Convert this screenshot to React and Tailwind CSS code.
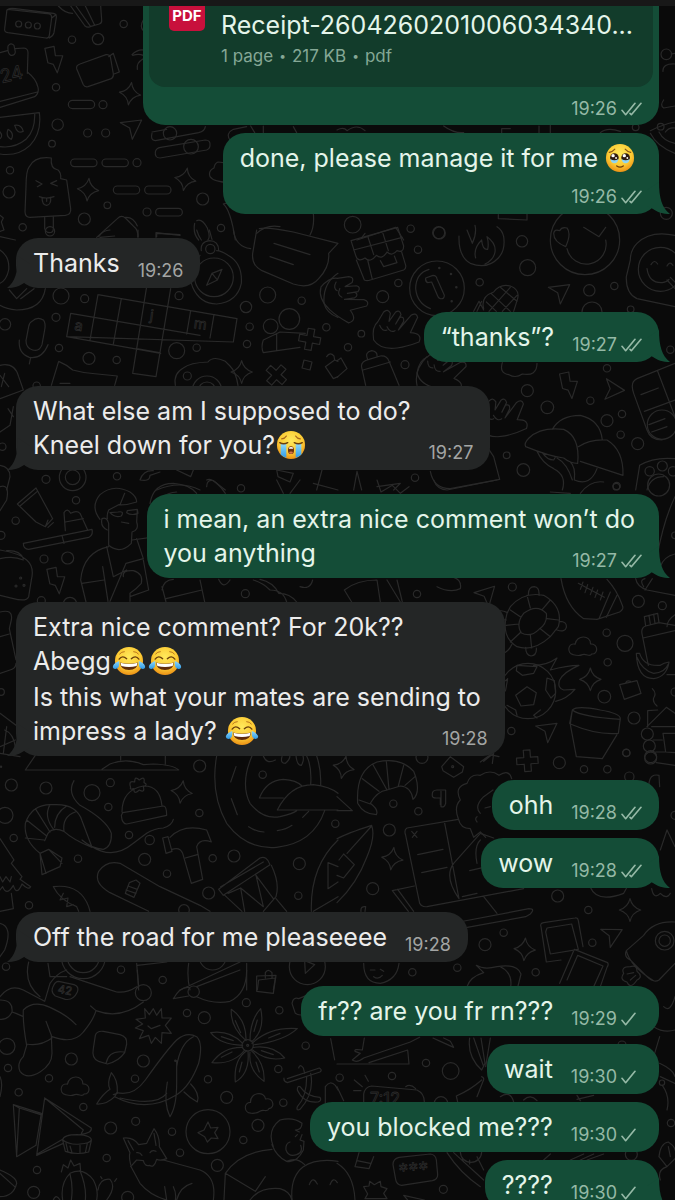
import React from "react";

/* ---------- wallpaper ---------- */

const SPARK = "M0 -34 Q6 -8 32 0 Q6 8 0 34 Q-6 8 -32 0 Q-6 -8 0 -34Z";
const BOLT = "M-26 -36 L2 -40 L4 -12 L26 -10 L6 40 L-4 14 L-20 8Z";
const ARROW = "M-32 -20 L32 -28 L4 30 L-4 -4Z";
const CLOUD = "M-28 28 C-48 24 -46 -6 -24 -4 C-22 -34 22 -34 22 -8 C46 -10 48 22 28 22 C22 34 12 20 0 26 C-10 32 -18 30 -28 28Z";
const PLUS = "M-10 -32 H10 V-10 H32 V10 H10 V32 H-10 V10 H-32 V-10 H-10Z";
const HAND = "M-70 30 Q-76 -10 -58 -24 L-40 -54 Q-28 -66 -20 -50 L-24 -26 L-4 -54 Q8 -62 12 -46 L-4 -18 L8 -38 Q22 -42 20 -26 L4 0 L42 -44 Q58 -54 62 -38 L40 8 Q78 10 66 36 Q30 50 0 54 Q-50 60 -70 30Z M-52 -14 Q-44 6 -30 0 M-30 -10 Q-20 10 -6 2";

/* Each tile is drawn on a grid of three units per pixel. */
const TILES = [
  {
    at: [0, 0],
    circles: [[56, 72, 9], [85, 75, 9], [112, 78, 9], [216, 119, 11], [294, 117, 17], [371, 72, 11], [168, 262, 11], [309, 314, 12], [173, 374, 17], [263, 399, 12], [317, 399, 12], [156, 431, 10], [30, 511, 11], [27, 576, 18], [411, 488, 12], [322, 616, 10], [253, 657, 18], [68, 682, 11], [441, 636, 12], [608, 597, 18], [663, 684, 11], [510, 400, 20], [573, 440, 22]],
    pills: [[205, 301, 79, 25], [212, 477, 79, 23], [306, 477, 79, 23], [340, 558, 79, 24], [434, 558, 79, 24], [467, 625, 80, 23]],
    marks: [[SPARK, 390, 281, 8], [SPARK, 264, 569, 5], [SPARK, 556, 538, 10], [BOLT, 163, 179, -4], [ARROW, 393, 388, 0]],
    paths: [
      "M24 28 L148 42 Q156 44 155 54 L148 106 Q147 115 138 114 L24 98 Q12 96 14 86 L20 36 Q20 28 24 28Z M24 28 Q30 24 46 26 L160 40 Q170 42 169 52 L162 98 Q160 108 148 114 M155 54 L168 44",
      "M175 18 Q195 40 218 40 M212 18 L255 78 Q262 84 270 80 L298 72 Q306 70 305 60 L302 18 M228 18 L272 80 M256 18 L284 76",
      "M240 192 L318 164 Q328 162 331 170 L340 222 Q341 232 334 236 L264 260 Q254 262 250 254 L230 206 Q228 196 240 192Z M326 170 L340 160 L358 216 L342 222",
      "M0 158 L22 152 M46 146 L72 144 Q84 146 84 158 L82 220 M24 138 Q32 126 42 136 L46 156 Q44 168 32 166 Q22 160 24 138Z M82 216 Q108 236 114 262 Q118 280 104 290 L0 322 M112 276 L0 304",
      "M0 352 L118 338 Q126 398 90 436 Q54 470 0 462 M104 340 Q106 392 78 418 Q44 446 0 440 M44 376 Q64 372 70 394 Q52 404 44 376Z M24 388 Q44 400 34 418 Q16 410 24 388Z M0 396 Q10 408 0 416",
      "M154 474 Q104 468 88 500 Q78 512 78 560 L75 636 Q76 652 90 652 L196 646 Q214 644 212 626 L200 540 L182 536 Q184 518 174 510 Q150 506 154 474Z M134 652 V686 Q138 698 148 698 Q160 698 160 686 V650 M108 542 L126 552 L112 560 M170 542 L152 550 L172 558 M118 590 Q138 598 162 590 M126 592 Q126 616 140 616 Q154 614 152 592 M140 594 V604",
      "M290 712 L352 656 Q364 644 376 654 L404 682 Q414 690 414 712 M376 652 Q400 650 412 678 M300 712 L344 708 M468 712 V698 L540 706",
      "M456 400 Q450 420 466 422 L596 398 Q614 394 616 380 M500 388 L456 396 M482 442 L616 420 Q632 420 630 436 Q630 446 620 450 L480 474 Q464 474 466 456 Q468 444 482 442Z",
      "M396 164 Q412 148 430 150 M398 166 Q416 160 430 166 M430 176 Q408 188 412 208 M430 60 Q418 80 430 92",
      "M690 490 L654 486 Q644 490 642 504 Q624 512 630 530 Q640 546 690 548 M670 612 L690 606 M670 612 Q692 630 706 720 M590 662 Q606 654 622 684 Q632 710 624 720 M584 670 Q578 700 596 720 M770 700 Q800 672 840 680 M940 640 Q944 680 930 705",
      "M690 420 Q676 400 700 388 L740 380 M752 378 L764 398 M790 378 V398 M880 380 L890 398",
      "M0 646 L10 654 L4 666 L12 690 L0 694",
    ],
    labels: [["24", 5, 250, 56, -14]],
  },
  {
    at: [337, 0],
    circles: [[47, 674, 25], [221, 686, 11], [307, 699, 18], [988, 163, 16], [896, 382, 10], [988, 640, 18], [971, 380, 10]],
    marks: [],
    paths: [
      "M1014 160 L1002 162 M980 300 Q968 316 980 324 L1014 318 M1014 192 Q976 190 978 214",
      "M940 392 Q980 372 1014 366 M940 400 Q960 440 1014 460 M966 396 Q980 424 1014 430 M985 396 A30 30 0 0 1 1014 384",
      "M60 720 L176 682 L200 720 M72 716 L84 700 M484 644 V656 L570 660 V642 M0 390 Q20 380 30 392 Q60 370 84 392 M320 378 Q350 400 380 398 M494 398 V386 H520 M606 398 V378 M640 376 V398 M790 398 Q810 380 850 394",
    ],
  },
  {
    at: [0, 230],
    circles: [[183, 198, 24], [254, 206, 12], [15, 283, 17], [168, 262, 12], [537, 197, 12], [177, 354, 11], [267, 385, 18], [350, 390, 11], [738, 231, 17], [803, 195, 24], [905, 212, 11], [749, 290, 11], [741, 342, 11], [812, 289, 22], [868, 267, 31], [979, 292, 11], [530, 362, 24], [590, 353, 11], [562, 438, 12], [138, 748, 12], [351, 739, 11], [110, 467, 11], [631, 57, 14], [642, 142, 58], [218, 742, 22], [218, 742, 40], [621, 482, 44], [621, 482, 26], [150, 4, 14], [7, 650, 11]],
    marks: [[PLUS, 929, 328, 10], [PLUS, 829, 435, 42], [SPARK, 725, 426, 0]],
    paths: [
      "M294 194 L711 266 L700 336 L200 320 L212 250 L600 316 M294 194 L270 330 M364 206 L340 342 M440 170 L398 430 L468 440 L512 176 M410 356 L478 368 M572 242 L560 312 M642 254 L630 324 M200 320 L482 370",
      "M604 62 Q600 36 628 32 Q656 32 656 62 M600 76 Q560 130 578 172 Q600 222 650 222 Q712 216 724 160 Q728 100 684 76 Q664 62 650 62 M620 166 L636 130 L666 118 L652 150Z M636 130 L652 150 M590 0 Q596 20 604 30 M628 0 L636 28",
      "M770 0 L758 70 Q754 106 786 122 L880 162 Q930 178 956 146 Q990 110 986 70 L1014 40 L880 6 Q800 -10 778 -4 M822 40 L930 74 M810 80 L880 104 M700 0 Q706 50 752 56 M1014 130 Q968 160 972 220 Q980 250 1014 262",
      "M96 274 Q112 258 130 270 Q138 280 134 300 L126 344 Q118 366 98 360 Q78 354 78 332 L86 290 Q88 278 96 274Z M58 330 Q54 370 88 382 Q126 388 144 344 M92 382 L88 402",
      "M154 466 L176 394 Q200 404 218 420 Q252 430 292 432 L352 438 L344 466 M180 460 H210 M526 466 Q520 430 550 414 Q570 398 624 396 Q640 376 676 394 L690 408 Q708 426 714 466",
      "M0 406 Q44 396 56 440 L70 480 L0 506 M0 436 L26 470 M14 430 L4 470 M0 60 Q30 80 26 120 Q20 150 0 160 M28 180 L50 206 L80 176 M62 206 L102 176 M136 176 Q126 240 50 240 Q20 238 0 226 M0 20 L46 30",
      "M790 330 Q782 350 790 368 L900 352 M790 330 L840 306 L916 310 M830 310 V360 M912 390 L936 396 L930 420 L906 414Z M980 380 Q990 364 1002 378 L1004 390 M976 410 L1004 390 L1014 394 M976 410 L1000 446 L1014 440",
      "M24 536 L40 560 M40 530 L30 586 L0 606 M0 706 Q30 710 30 740 L20 780 M420 750 Q430 720 460 722 M420 750 Q450 756 450 736 L480 726 M530 720 L572 740 L580 720 M620 770 Q620 748 640 752 L676 780 M470 780 Q540 750 600 780 M830 720 L880 730 L870 756 L834 740 Z M950 780 L966 720 M296 20 Q310 0 330 0 M414 0 V20 M470 20 V10 L540 14",
    ],
    labels: [["a", 222, 300, 44, 8], ["j", 448, 270, 44, 8], ["m", 580, 294, 44, 8]],
  },
  {
    at: [337, 230],
    circles: [[243, 59, 11], [305, 8, 18], [555, 34, 17], [572, 113, 24], [184, 159, 11], [137, 200, 18], [428, 157, 11], [757, 181, 17], [832, 168, 11], [765, 246, 30], [881, 238, 10], [73, 311, 10], [33, 352, 11], [204, 404, 12], [1000, 359, 11], [810, 415, 11], [571, 482, 18], [631, 532, 19], [760, 512, 11], [855, 552, 11], [810, 572, 18], [851, 614, 11], [902, 641, 18], [509, 676, 10], [559, 720, 19], [234, 743, 11], [839, 768, 11], [300, 175, 82], [744, 30, 104], [970, 118, 66], [975, 584, 44], [307, 114, 2], [342, 132, 2], [358, 172, 2], [344, 214, 2], [938, 724, 14], [976, 708, 15], [1008, 724, 14]],
    marks: [[HAND, 180, 300, 0], [HAND, 500, 564, -4], [HAND, 20, 205, 50], [HAND, 316, 424, 20], [BOLT, 696, 466, -4], [ARROW, 666, 192, 0], [ARROW, 820, 482, 40]],
    paths: [
      "M42 32 L182 -8 L200 48 Q200 70 180 62 Q166 80 150 66 Q136 90 118 76 Q100 100 84 84 Q62 98 56 76Z M58 90 L82 150 Q90 154 100 150 L200 120 Q208 116 206 106 L194 66 M92 18 L110 74 M136 4 L154 62 M50 60 L196 22 M106 148 L92 90 M130 92 L140 110 L180 98 L172 78",
      "M276 118 Q236 130 236 176 Q240 220 280 236 M266 144 L288 136 Q298 136 300 146 L322 196 Q322 208 310 206 Q304 204 302 198 L284 156 L272 158 Q264 154 266 144Z",
      "M366 18 Q364 80 400 100 Q450 120 484 84 Q506 60 500 20 Q496 0 480 -10 M390 0 L406 40 Q420 10 414 -14 M416 84 Q408 56 434 30 Q436 60 452 58 Q456 40 450 20 Q478 40 474 66 Q470 90 444 102",
      "M650 10 Q652 -4 668 2 Q674 -10 690 -6 Q704 10 686 50 Q650 36 650 10Z M740 -8 L786 20 L806 -8 M690 56 A58 58 0 0 0 806 30",
      "M1014 16 Q940 0 900 40 Q880 60 880 90 L868 140 Q866 190 900 206 L1014 230 M930 116 Q936 160 976 158 Q990 156 996 148 M942 104 Q952 86 962 102 M990 108 Q998 92 1008 106 M990 150 L1014 176 M1000 142 L1014 156",
      "M440 236 Q430 200 470 186 Q490 160 520 168 Q552 180 540 212 L530 244 M410 244 L426 214 L440 240 M462 190 L520 244 M490 172 L540 214 M448 216 L478 244 M520 172 L456 244 M540 196 L496 244 M434 214 L420 244",
      "M86 466 L74 412 Q70 394 96 388 L130 378 Q150 376 156 394 L186 466 M92 388 Q82 366 104 362 Q122 364 120 380 M78 420 L160 396 M0 392 L12 384 L30 416 L0 442 M240 466 Q230 420 270 380 M260 466 M496 398 Q486 430 516 434 Q536 446 556 432 Q600 440 600 400",
      "M566 650 Q560 640 576 624 Q610 590 680 598 Q730 620 722 700 Q700 700 680 684 Q640 680 566 650Z M646 598 Q670 556 730 556 Q790 570 796 630 M724 650 Q760 626 810 630 Q860 660 858 736 L730 694 M600 664 Q616 700 650 716 Q690 736 676 780 M660 684 Q690 700 706 750 M700 696 Q716 710 712 750 Q760 770 780 716 M616 668 Q630 690 650 690 L656 680",
      "M1014 400 L900 446 Q878 456 890 490 L930 600 Q940 630 975 630 M962 424 L1014 560 M912 494 L964 474 M922 544 L1014 510 M936 584 L984 566 M944 606 L990 590 M908 706 Q950 680 1014 686 M908 706 L896 780 M930 780 Q940 740 980 740 M450 650 L470 680 L488 748 L340 776 Q290 776 280 724 M120 770 L190 760 L170 780 M60 724 L50 780 M60 724 L74 780",
    ],
  },
  {
    at: [0, 480],
    circles: [[228, 61, 11], [47, 122, 11], [132, 237, 12], [203, 234, 18], [3, 166, 12], [124, 362, 12], [736, 341, 12], [723, 25, 11], [3, 636, 10], [210, 372, 20], [62, 294, 3], [48, 318, 3], [72, 316, 3], [3, 860, 2]],
    marks: [[BOLT, 169, 302, -4]],
    paths: [
      "M52 72 L108 24 L158 116 L136 140 L108 126Z M136 140 L144 120 M144 142 L160 128 M60 78 L112 34 M70 190 L276 148 Q280 166 266 172 L86 208 Q70 208 70 190Z M186 166 L192 190 M196 152 L192 98 Q202 82 212 100 Q230 90 240 100 L262 148 M196 126 L250 116",
      "M300 118 Q270 80 300 44 Q340 10 390 36 Q410 50 410 66 Q380 76 356 74 L326 90 Q320 104 322 116 M306 116 Q320 110 326 130 L326 196 Q360 224 394 190 L396 156 Q418 150 410 126 L412 88 M330 98 Q344 114 364 108 Q374 92 354 96Z M380 98 Q394 108 414 100 L412 88 L382 92Z M364 126 L386 130 M374 40 L360 74 M306 116 Q300 140 322 150",
      "M326 200 Q250 216 242 300 L258 366 M320 200 L340 290 L380 270 M396 180 L470 170 M410 176 L430 236 L378 250 L330 364 M430 240 L446 330 L390 350 M370 290 Q366 270 400 272 Q430 280 424 310 Q410 326 390 340 V364 M246 310 L312 300 M308 260 L324 364",
      "M0 210 Q60 220 80 240 Q104 260 94 300 L86 350 Q80 366 40 356 L0 346 M0 236 Q40 226 70 240 M20 212 Q60 210 70 236 M0 396 Q40 386 34 420 L28 446 L48 540 M0 470 L28 462 M0 580 L30 570 Q48 566 48 550",
      "M450 70 Q460 10 520 10 Q570 14 590 40 M466 86 Q480 40 530 36 M486 330 Q490 300 520 298 M486 320 L498 366 M600 300 L614 366 M498 356 L606 330 M656 298 Q670 330 690 300 M760 300 Q790 310 810 330 Q850 330 860 366 M780 298 Q820 306 836 340 Q870 340 890 366 M900 320 Q930 330 938 300 M620 0 Q640 -10 676 40 M830 0 L850 40 M900 0 L870 40 M940 10 L1014 30 M0 700 L48 736 M14 750 Q40 760 46 800 M0 800 L46 780 M0 820 L60 830 M20 740 L10 820 M0 20 Q30 10 20 60 L0 92",
    ],
  },
  {
    at: [337, 480],
    circles: [[965, 15, 33], [838, 20, 10], [240, 342, 11], [526, 321, 12], [904, 364, 18], [976, 377, 12], [809, 458, 11], [864, 490, 24], [812, 547, 11], [802, 650, 19], [523, 753, 11], [891, 714, 18], [868, 819, 11], [573, 633, 83], [931, 762, 18], [937, 798, 18], [941, 834, 18], [1014, 636, 12], [1014, 166, 10]],
    marks: [[CLOUD, 738, 498, 4], [SPARK, 760, 598, 0], [ARROW, 628, 758, 0], [ARROW, 446, 352, -10]],
    paths: [
      "M520 380 Q560 334 620 346 Q680 380 664 440 L640 470 Q590 516 540 500 Q490 470 510 400Z M560 400 Q600 370 628 400 Q632 430 606 448 Q580 474 552 458 Q536 430 560 400Z M520 390 L552 412 M570 346 L580 384 M640 360 L616 388 M664 420 L630 416 M640 470 L610 446 M584 504 L580 464 M520 486 L552 456 M508 436 L546 432 M574 344 Q574 320 592 320 Q608 322 606 346 M668 424 Q690 424 688 442 Q684 458 660 450 M566 502 Q566 526 582 528 Q600 526 598 504 M512 398 Q480 384 486 404 Q492 420 508 420 M486 520 Q510 524 524 494",
      "M672 296 Q686 380 740 416 L780 418 L848 396 Q862 386 856 376 Q840 330 810 298 M786 416 L820 336 M808 412 L840 346 M724 310 L802 352 M738 306 L730 328 M752 314 L744 338 M768 322 L760 344 M782 330 L774 352 M798 336 L790 360",
      "M540 556 L600 560 L590 580 L556 586 L538 572Z M570 620 L598 638 L590 674 L552 678 L536 646Z M630 594 L652 602 L656 640 L642 654 L626 630Z M496 610 L512 596 L506 630 L494 650 M510 676 L536 690 L540 706 M610 690 L590 706 L600 714 M590 556 Q630 556 660 534 L640 570 Q690 556 726 556 Q680 576 668 600 Q660 624 680 630 L714 628 Q690 656 656 664",
      "M706 690 Q720 676 790 690 Q850 700 850 716 L844 760 Q780 766 700 732Z M706 690 Q730 710 850 718 M700 734 L718 830 L796 836 L840 764 M706 690 L698 730",
      "M922 410 L962 400 L966 428 L926 438Z M936 406 L940 432 M950 402 L954 430 M926 438 Q910 444 916 466 L934 556 M966 428 L1014 436 M918 474 L1014 452 M898 520 Q900 596 950 596 Q990 590 996 546 Q980 548 970 556 Q920 560 908 520Z M900 532 Q916 572 950 580 Q984 578 994 552 M1014 584 L990 584 M990 440 Q990 420 1014 404",
      "M848 614 L900 602 L912 640 L862 658Z M866 608 Q870 600 880 604 M946 626 Q960 640 950 654 Q946 666 960 678 M932 740 V692 L962 690 M930 740 L988 682 L1014 700 M944 740 H1014 M978 760 H1014 M978 760 L986 816 L1014 818 M948 780 H976 M956 816 H984 M958 848 L1014 856 M896 296 Q900 320 930 330 L1014 346 M920 320 Q906 300 924 296 M924 330 L946 296",
      "M340 290 Q376 296 370 326 Q340 340 300 320 M22 330 Q60 300 120 300 L130 366 M22 330 L44 366 M150 300 L190 366 M180 300 L196 366 M290 0 Q300 28 330 30 L480 0 M640 36 L700 40 M730 40 Q760 0 800 6 M120 0 L132 36 L166 16 L190 40 L216 20 M1014 50 Q980 120 960 230 M970 260 Q980 230 1014 222",
    ],
  },
  {
    at: [0, 750],
    circles: [[34, 105, 18], [138, 114, 18], [276, 128, 24], [331, 98, 12], [325, 171, 11], [599, 48, 18], [15, 196, 24], [41, 264, 11], [387, 255, 11], [234, 326, 11], [598, 189, 11], [449, 270, 14], [434, 328, 18], [501, 371, 11], [638, 325, 11], [702, 318, 18], [626, 429, 18], [788, 74, 11], [898, 341, 18], [895, 437, 11], [87, 466, 11], [1006, 221, 11], [18, 650, 11], [363, 659, 11], [488, 690, 11], [552, 480, 16], [922, 650, 54], [638, 620, 40], [250, 620, 66], [250, 620, 48]],
    marks: [[SPARK, 545, 126, 8]],
    paths: [
      "M106 16 L76 60 H536 Q520 44 460 42 L430 44 Q380 22 330 42 L306 58 M362 18 V30 M496 18 V42",
      "M366 186 Q366 120 430 108 Q480 106 486 168 M368 188 L490 168 Q500 168 500 196 L380 222 Q366 222 364 196Z M392 112 Q384 90 404 96 Q404 76 418 90 Q436 76 432 98 Q446 104 430 110 Q436 130 418 120 Q400 136 402 116 Q388 120 392 112Z",
      "M120 310 Q70 270 76 220 Q96 160 160 164 Q230 160 246 212 L276 292 Q220 270 192 244 Q160 230 144 250 L134 272 M76 264 L132 270 M80 210 L140 258 M106 176 L150 246 M150 164 Q130 200 162 240 M200 168 Q164 190 164 232 M226 186 Q186 200 192 244 M120 310 L146 298 L186 324 L180 350 L126 374Z M120 310 L138 370 M146 298 L186 340 M222 92 Q200 130 240 166 Q320 210 334 250 Q336 290 310 298 Q276 296 246 270 M276 290 Q340 330 400 280 L440 250 Q460 236 490 234 Q516 226 520 208",
      "M488 264 L504 260 L516 304 L498 310Z M510 262 Q550 220 620 240 L634 276 Q600 264 590 290 L608 388 L574 400 L548 310 Q540 290 516 298 M556 324 L592 314",
      "M330 428 Q280 400 296 364 Q320 330 360 340 L480 410 L600 466 L630 484 M330 428 L446 484 M388 398 L408 390 L420 400 L402 442 L376 430Z M384 408 L412 418 M378 420 L408 430",
      "M656 418 L780 324 Q800 316 810 344 L670 436Z M662 410 L790 336 M672 434 L726 484 M814 346 Q840 400 828 440 L790 484 M684 430 L722 414 L734 484 M722 414 L790 470 L768 376 L820 446 M828 446 L860 484",
      "M650 18 Q630 130 680 220 Q740 300 830 292 Q940 280 974 182 M756 18 Q720 100 750 160 Q790 210 840 200 Q880 190 890 182 M708 50 L692 96 M694 146 L712 194 M746 230 Q770 246 792 246 M832 242 Q860 238 876 226 M908 202 L926 184 M778 144 Q800 90 850 88 Q890 90 906 108 M778 144 H850 M832 180 Q870 104 940 104 Q990 110 1014 130 M832 180 H1014 M920 18 Q936 50 932 104 M950 18 Q964 60 962 104 M790 18 Q800 44 826 30 M846 20 Q840 40 856 40 Q870 30 870 16 M888 16 Q890 46 904 46 Q914 30 908 14",
      "M0 266 L42 330 L34 340 L66 380 L60 388 L92 410 Q86 422 66 402 Q50 440 40 406 Q20 440 8 410 L0 420 M34 430 L40 476 L0 484 M0 380 L8 396 L18 380 L30 396 L34 380 M160 410 Q240 400 266 470 L270 484 M160 410 Q180 450 230 470 L236 484 M190 430 L180 450 L204 444 L200 470 L220 464 M0 520 Q40 530 14 600 L0 620 M1014 270 Q930 350 934 484 M984 338 V416 L1014 396 M984 338 L1014 350 M940 484 L1014 440",
      "M86 636 Q70 700 120 740 M144 640 L150 680 H200 M410 640 L416 720 M412 646 L500 636 M566 640 Q560 680 570 720 M740 640 V720 M540 720 L720 636 M776 690 L826 684 L820 720 M776 690 L772 720 M796 684 V668 Q804 654 816 668 V684 M914 632 L944 644 L916 670Z",
    ],
  },
  {
    at: [337, 750],
    circles: [[169, 161, 11], [244, 184, 11], [157, 240, 18], [107, 416, 18], [500, 548, 11], [444, 584, 18], [226, 667, 11], [361, 653, 11], [596, 667, 11], [662, 438, 18], [754, 480, 11], [766, 578, 11], [667, 38, 18], [741, 58, 11], [811, 58, 11], [868, 8, 11], [255, 22, 18], [983, 572, 28], [983, 572, 17], [347, 50, 3], [941, 20, 18], [877, 80, 14], [1014, 196, 12]],
    marks: [[SPARK, 20, 52, 12], [SPARK, 166, 326, 8], [SPARK, 879, 480, 0], [SPARK, 563, 598, 4], [ARROW, 820, 562, 8], [PLUS, 571, 32, -4]],
    paths: [
      "M62 160 Q56 60 120 36 Q190 20 230 64 L236 80 Q250 130 228 148 Q222 110 190 108 L150 120 Q120 124 100 160 Q126 180 118 194 Q80 194 62 160Z M76 86 L126 124 M108 44 L150 120 M148 34 L156 118 M200 46 L184 108 M234 80 L204 106 M66 150 L100 162",
      "M314 50 L340 20 L380 50 L376 66 L350 82 L318 62Z M286 136 Q284 120 300 120 H326 V160 Q322 174 312 170 V124 M298 144 Q284 144 286 134 M298 144 H310 V164",
      "M364 206 Q350 170 370 150 Q350 110 390 100 Q400 70 430 76 Q460 56 486 76 Q516 56 524 86 M364 206 Q370 236 400 236 L410 262 L430 246 L446 262 M430 190 Q410 170 440 140 L468 120 M444 174 L460 170 M420 200 Q412 206 420 216",
      "M364 208 L210 234 Q200 240 206 256 L248 460 Q254 472 270 470 L560 416 M322 214 L366 446 M242 314 L318 298 M254 368 L330 352 M224 244 L240 262 M240 244 L226 262 M366 446 Q320 380 350 340 L430 250 L470 264 M376 440 L420 430 M398 362 L440 352 M420 340 Q410 290 430 270 M166 422 L232 408 M166 422 L214 484 M182 418 L230 484 M440 440 L480 490 M366 516 L576 476 Q596 476 580 492 L566 500 L370 536 M0 266 Q30 250 104 226 Q116 260 90 320 Q60 400 0 458 M6 330 L20 312 L52 344 L20 384 L0 376 M104 228 L30 310 M0 140 L46 182 H0 M72 484 Q70 468 86 470 L84 484",
      "M612 530 Q608 520 620 518 L714 504 Q722 502 724 512 L738 590 M612 530 L628 636 L672 630 M630 534 L704 522 L724 598 L640 612 L626 546Z M712 598 L812 638 Q816 644 810 652 L790 710 M712 598 L668 700 M722 616 L798 648 L770 710 M722 616 L690 690",
      "M1014 516 Q950 512 920 556 L868 602 Q860 620 880 630 L930 680 Q950 700 966 690 L1014 640 M868 602 Q880 650 950 692 M880 650 Q850 650 860 670 Q846 690 870 696 Q880 720 900 690 Q920 680 900 664 Q900 644 880 650Z M870 672 L890 668 M880 690 L896 676",
      "M80 640 Q80 700 130 700 Q180 690 186 640 M100 660 H114 M130 658 L140 664 M110 680 Q124 690 136 676 M418 646 Q440 660 480 650 Q540 640 552 672 L540 720 M418 646 L440 668 Q400 680 390 710 M490 650 Q530 670 520 716 M760 412 Q780 460 860 430 L870 412 M990 240 L970 300 M990 240 L1014 290 M944 416 Q950 450 970 430 Q990 450 1000 430 M430 36 L460 14 L486 20 M440 34 L470 10 L466 40 M936 100 Q940 70 966 76 L968 110",
    ],
  },
  {
    at: [0, 970],
    circles: [[561, 129, 11], [613, 143, 18], [739, 98, 12], [838, 121, 11], [21, 229, 24], [24, 294, 11], [214, 267, 18], [147, 325, 11], [430, 273, 18], [405, 326, 11], [56, 367, 11], [250, 411, 11], [624, 328, 11], [680, 382, 18], [835, 297, 11], [917, 227, 11], [850, 398, 11], [332, 474, 18], [407, 454, 12], [516, 485, 11], [540, 548, 11], [774, 466, 18], [730, 510, 11], [652, 586, 18], [320, 564, 11], [111, 600, 11], [101, 667, 18], [383, 682, 18], [624, 485, 66], [743, 226, 17], [526, 272, 2], [581, 65, 17], [430, 68, 24], [743, 226, 3]],
    marks: [[CLOUD, 226, 348, 4], [CLOUD, 776, 398, -8]],
    paths: [
      "M434 116 L448 134 L460 116 L470 136 L484 116 L486 144 L514 144 L496 166 L514 190 L486 188 L484 220 L466 202 L454 220 L446 196 L418 206 L430 182 L406 174 L428 162 L408 148 L436 144Z M444 168 L454 176 L480 166",
      "M286 196 Q290 182 310 184 L360 194 Q382 200 380 222 L374 248 Q356 274 322 282 L296 274 Q274 266 280 236Z M318 280 Q326 240 372 246",
      "M350 368 Q400 380 436 330 Q500 240 530 210 Q560 184 590 200 Q610 220 596 280 Q570 350 530 374 Q440 430 344 380 M334 308 Q354 330 352 366 L344 380 Q320 404 290 402 Q310 370 330 358 Q320 340 334 308Z M530 272 L530 340 Q530 410 510 440 Q490 400 502 336 M500 370 Q470 410 360 384 M572 342 Q600 370 592 396 Q570 384 552 366 M580 200 Q540 220 530 290 M352 370 L340 374",
      "M738 212 Q690 170 694 118 Q740 150 738 212Z M750 212 Q750 150 782 116 Q796 180 756 214Z M756 220 Q810 170 892 176 Q850 214 764 224 M728 220 Q690 180 632 188 Q660 224 728 226 M728 232 Q670 230 636 278 Q700 284 734 240 M740 242 Q700 270 706 336 Q750 310 744 244 M754 242 Q796 280 792 334 Q744 300 750 246 M760 232 Q820 224 854 264 Q800 276 758 240 M706 152 L722 188 M772 150 L762 184 M806 204 L840 190 M664 200 L700 212 M664 262 L696 246 M718 306 L726 276 M778 306 L768 276 M784 242 L820 254",
      "M40 404 L124 430 L108 526 L50 560Z M40 404 L58 414 L50 556 M58 414 L122 434 M134 384 L274 474 Q276 490 240 494 M134 384 L110 556 L190 520 M134 384 L144 392 L250 480 L244 490 M112 552 L188 508 M188 510 Q190 494 232 494 Q276 496 274 512 L266 546 Q230 556 196 544Z M188 510 Q210 526 240 522 Q270 520 274 510 M198 520 L204 546 M262 520 L256 548 M210 528 L216 548 M240 526 V548",
      "M392 584 Q386 560 390 548 L370 504 Q400 500 416 524 L440 520 L462 476 Q480 500 478 530 L500 566 Q480 574 470 568 Q462 596 448 586 Q434 590 430 572 L410 570 L392 590 M384 512 L400 540 M462 490 L468 526 M410 548 Q420 546 426 556 M450 548 Q456 538 468 544 M392 588 L420 640 Q450 676 500 690 M490 570 L600 600 Q650 620 640 690 M494 650 L500 690 M530 690 Q540 650 576 640 M520 650 Q530 670 526 690",
      "M184 606 L190 584 L204 594 L212 570 L222 588 L240 580 L242 604 M188 690 Q180 640 210 610 Q250 590 280 630 Q296 660 290 690 M210 612 Q220 650 214 690 M240 602 Q260 650 256 690 M294 660 Q300 624 330 628 Q350 650 320 690 M306 626 L302 620 M344 634 L350 626 M160 690 Q168 670 180 690",
      "M820 530 Q800 480 840 450 Q880 440 906 460 Q906 480 886 480 L898 486 M816 524 Q830 560 860 574 Q890 580 910 540 L912 514 L900 510 L906 494 M886 500 L892 494 M870 516 Q856 520 858 540 Q866 562 890 554 Q910 546 902 526 M816 538 Q720 546 676 610 L766 664 L796 620 M676 610 L672 690 M860 574 Q890 560 914 584 M750 690 Q780 650 840 656 Q870 664 876 690",
      "M876 690 Q870 620 910 590 Q950 564 1014 574 M928 644 Q938 616 952 642 M990 644 Q1000 618 1012 638 M852 324 Q850 334 862 338 L960 306 Q968 300 958 294 L862 326 M896 294 Q900 280 910 294 L914 310 M932 310 Q944 370 900 418 Q888 424 892 410 Q920 380 920 320 M900 350 Q920 380 960 382 Q966 392 954 396 Q910 400 892 360 Q892 346 900 350 M976 400 V350 Q990 330 1006 346 L1014 360 M992 206 L1004 270 M876 100 Q880 80 896 86 L920 76 M876 100 L886 130 Q900 140 918 130",
      "M70 120 Q100 90 150 112 Q200 134 228 164 M70 120 Q68 160 80 226 L70 260 Q50 280 60 304 Q80 330 120 306 Q156 284 156 250 L154 196 L138 154 M80 222 Q120 230 156 204 M156 200 Q220 224 250 186 Q280 150 288 122 L272 108 M288 122 Q360 150 430 96 M0 80 Q30 40 70 60 L134 94 L150 40 Q170 10 200 0 M0 90 Q40 90 36 126 Q24 150 0 148 M36 126 L48 130 L70 140 M210 20 Q300 50 350 66 Q380 70 410 50 M520 86 Q540 50 566 52 M520 86 L566 78 M590 50 L720 0 M590 80 Q640 104 690 94 Q740 70 740 0 M770 18 L828 16 L820 70 L770 64Z M412 0 L416 50",
      "M176 34 L222 44 Q238 50 232 66 Q220 92 196 88 L166 78 Q150 66 160 48 Q166 34 176 34Z M0 600 Q50 620 50 640 Q40 680 0 680 M0 610 L44 650 M0 320 Q10 340 0 380",
      "M624 456 L632 474 L654 472 L644 488 L654 506 L634 504 L622 516 L614 500 L594 488 L612 480Z",
    ],
    labels: [["42", 172, 68, 34, 10]],
  },
  {
    at: [337, 970],
    circles: [[267, 279, 11], [341, 303, 25], [8, 323, 11], [165, 318, 11], [312, 400, 20], [319, 658, 12], [1002, 459, 11], [883, 553, 18], [855, 225, 12], [402, 545, 32], [975, 338, 8]],
    marks: [],
    paths: [
      "M0 282 H216 L212 240 L96 278 M82 204 L76 240 Q50 236 54 244 L70 250 L46 270 Q60 280 80 264 L220 216 L248 202 M288 204 L310 214 L350 232 L340 214 L320 204",
      "M398 204 Q390 260 434 300 L444 280 L432 204 M410 204 L440 290 M460 204 L446 290 M434 330 Q400 360 358 378 L362 396 M434 320 Q444 324 438 334 L420 380 M490 380 Q520 360 530 396 M720 388 L770 376 M720 376 L730 392 M560 390 Q580 370 600 392",
      "M80 396 V372 Q84 350 104 348 L240 360 Q262 370 262 396 M206 350 Q220 340 236 356 M52 330 L76 350 M84 316 L94 334 M50 362 H72 M0 350 L20 392",
      "M186 562 L280 552 Q296 554 298 570 L302 614 Q302 628 286 632 L194 646 Q178 644 176 628 L168 584 Q168 566 186 562Z",
      "M66 548 L54 590 L96 596 L110 560 M60 572 L100 580 M80 650 L96 648 L98 634 L112 644 L130 634 L132 650 L150 656 L140 670 L150 686 H84 L92 672Z M0 580 Q50 610 54 690 M200 676 L262 690 M200 676 L212 690 M330 548 Q370 610 430 650 M420 560 L440 600 M350 548 L440 630 M376 566 L380 576 M398 570 V582 M640 552 L620 570 M740 552 L700 570 M770 552 L730 570 M800 552 L750 570",
      "M1014 80 Q1000 130 980 110 M950 170 Q980 190 1014 180 M968 200 L950 260 M968 280 Q1010 300 1014 320 M976 346 Q1000 380 990 420 M970 320 L1014 340 M966 560 Q970 520 994 516 Q1014 530 1014 540 M966 560 L990 590 L1014 566 M990 590 Q960 600 970 630 M994 530 L1000 560",
    ],
    labels: [["***", 186, 624, 60, -4], ["7:12", 98, 406, 50, 0]],
  },
];

function Wallpaper() {
  return (
    <svg
      aria-hidden="true"
      className="absolute left-0 top-0 h-[1200px] w-[675px] text-[#292929]"
      viewBox="0 0 675 1200"
      fill="none"
      stroke="currentColor"
      strokeWidth="3.6"
      strokeLinecap="round"
      strokeLinejoin="round"
    >
      {TILES.map((t, i) => (
        <g key={i} transform={`translate(${t.at[0]} ${t.at[1]}) scale(0.33333)`}>
          {t.circles.map(([x, y, r], k) => (
            <circle key={k} cx={x} cy={y} r={r} />
          ))}
          {(t.pills || []).map(([x, y, w, h], k) => (
            <rect key={k} x={x} y={y} width={w} height={h} rx={h / 2} />
          ))}
          {t.marks.map(([d, x, y, a], k) => (
            <path key={k} d={d} transform={`translate(${x} ${y}) rotate(${a})`} />
          ))}
          {t.paths.map((d, k) => (
            <path key={k} d={d} />
          ))}
          {(t.labels || []).map(([s, x, y, size, a]) => (
            <text
              key={s}
              fontSize={size}
              fontFamily="Inter, sans-serif"
              strokeWidth="2.4"
              transform={`translate(${x} ${y}) rotate(${a})`}
            >
              {s}
            </text>
          ))}
        </g>
      ))}
    </svg>
  );
}

/* ---------- emoji ---------- */

function FaceDefs() {
  return (
    <svg aria-hidden="true" className="absolute size-0">
      <defs>
        <radialGradient id="face" cx="0.5" cy="0.35" r="0.68">
          <stop offset="0" stopColor="#ffe95c" />
          <stop offset="0.6" stopColor="#fccb34" />
          <stop offset="1" stopColor="#ea8a12" />
        </radialGradient>
        <linearGradient id="tear" x1="0" y1="0" x2="0" y2="1">
          <stop offset="0" stopColor="#8fd8f8" />
          <stop offset="1" stopColor="#2f9be8" />
        </linearGradient>
      </defs>
    </svg>
  );
}

function Joy() {
  return (
    <svg role="img" aria-label="face with tears of joy" viewBox="0 0 36 32" className="mx-px inline-block h-[30px] w-[34px] align-[-6px]">
      <circle cx="18" cy="16" r="15" fill="url(#face)" />
      <path d="M7.500 14 Q11 9.500 15.500 13.500 M20.500 13.500 Q25 9.500 28.500 14" stroke="#6b3f0c" strokeWidth="1.500" fill="none" strokeLinecap="round" />
      <path d="M8 8.500 Q10 6 13 6 M23 6 Q26 6 28 8.500" stroke="#b5701a" strokeWidth="1" fill="none" strokeLinecap="round" />
      <path d="M8.500 17.500 Q18 20.500 27.500 17.500 Q27 25.500 18 25.500 Q9 25.500 8.500 17.500Z" fill="#5e2c0c" />
      <path d="M9 17.800 Q18 20.800 27 17.800 L26.200 21.200 Q18 23.400 9.800 21.200Z" fill="#fff" />
      <path d="M7.500 16 Q8.500 24 3.500 24.500 Q0 24 1 21 Q2.500 18 7.500 16Z M28.500 16 Q27.500 24 32.500 24.500 Q36 24 35 21 Q33.500 18 28.500 16Z" fill="url(#tear)" />
    </svg>
  );
}

function Sob() {
  return (
    <svg role="img" aria-label="loudly crying face" viewBox="0 0 32 32" className="mx-px inline-block size-[30px] align-[-6px]">
      <circle cx="16" cy="16" r="15" fill="url(#face)" />
      <path d="M5 15 H11 V29.500 Q7.500 28.500 5 26Z M21 15 H27 V26 Q24.500 28.500 21 29.500Z" fill="url(#tear)" />
      <path d="M4 13.500 Q8 16 12.500 13.500 M19.500 13.500 Q24 16 28 13.500" stroke="#6b3f0c" strokeWidth="1.500" fill="none" strokeLinecap="round" />
      <path d="M6 9.500 Q9.500 9 11 6.500 M26 9.500 Q22.500 9 21 6.500" stroke="#a8661a" strokeWidth="1.200" fill="none" strokeLinecap="round" />
      <ellipse cx="16" cy="21.500" rx="3.200" ry="4.200" fill="#6b2f0c" />
      <path d="M13.600 19 Q16 17.200 18.400 19 L18 20 H14Z" fill="#fff" />
      <ellipse cx="16" cy="24.200" rx="2" ry="1.200" fill="#d9774a" />
    </svg>
  );
}

function Pleading() {
  return (
    <svg role="img" aria-label="face holding back tears" viewBox="0 0 32 32" className="inline-block size-[30px] align-[-6px]">
      <circle cx="16" cy="16" r="15" fill="url(#face)" />
      <circle cx="10" cy="15.500" r="4.600" fill="#2e1b10" />
      <circle cx="22" cy="15.500" r="4.600" fill="#2e1b10" />
      <circle cx="8.600" cy="13.500" r="1.800" fill="#fff" />
      <circle cx="20.600" cy="13.500" r="1.800" fill="#fff" />
      <circle cx="11.800" cy="16" r="1" fill="#fff" />
      <circle cx="23.800" cy="16" r="1" fill="#fff" />
      <path d="M5.600 17 Q10 20 14.400 17 Q13.500 21.500 10 21.500 Q6.500 21.500 5.600 17Z M17.600 17 Q22 20 26.400 17 Q25.500 21.500 22 21.500 Q18.500 21.500 17.600 17Z" fill="#8fd4f2" />
      <path d="M4.500 10 Q8 9.500 10.500 6.500 M27.500 10 Q24 9.500 21.500 6.500" stroke="#8a5514" strokeWidth="1.200" fill="none" strokeLinecap="round" />
      <path d="M12.500 24.500 Q16 26.800 19.500 24.500" stroke="#6b3f0c" strokeWidth="1.400" fill="none" strokeLinecap="round" />
    </svg>
  );
}

/* ---------- message parts ---------- */

function Ticks({ double }) {
  return (
    <svg
      role="img"
      aria-label={double ? "delivered" : "sent"}
      viewBox="0 0 63 42"
      className="h-[14px] w-[21px] shrink-0"
      fill="none"
      stroke="currentColor"
      strokeWidth="5"
      strokeLinecap="round"
      strokeLinejoin="round"
    >
      <path d="M3 25 L14 38 L42 4" />
      {double && <path d="M27 34 L31 38 L60 4" />}
    </svg>
  );
}

function Stamp({ time, status }) {
  return (
    <span
      className={`flex shrink-0 items-center gap-1 text-[18px] leading-[18px] ${
        status ? "text-[#95b9a6]" : "text-[#a3a5a4]"
      }`}
    >
      <time>{time}</time>
      {status && <Ticks double={status === "delivered"} />}
    </span>
  );
}

function Tail({ side }) {
  return (
    <svg
      aria-hidden="true"
      viewBox="0 0 24 32"
      className={`absolute bottom-0 h-8 w-6 ${side === "out" ? "-right-3" : "-left-2.5 -scale-x-100"}`}
      fill="currentColor"
    >
      <path d="M0 8 L12 0 C12 16 15 26 23 32 C16 32 10 30 6 27 L0 24Z" />
    </svg>
  );
}

function Bubble({ side, tail, className = "", children }) {
  const out = side === "out";
  return (
    <article
      className={`relative w-fit max-w-full ${
        out ? "self-end bg-[#144d37] text-[#144d37]" : "self-start bg-[#242626] text-[#242626]"
      } ${className}`}
    >
      {tail && <Tail side={side} />}
      {children}
    </article>
  );
}

/* With `beside`, the time keeps a column of its own to the right of every line. */
function Message({ side, tail, time, status, lines, last, beside }) {
  const tone = side === "out" ? "text-[#e4f5ea]" : "text-[#ececec]";
  return (
    <Bubble side={side} tail={tail} className="rounded-[22px] px-[17px] py-2">
      <div className={`relative text-[25px] leading-[34px] whitespace-nowrap ${tone}`}>
        {lines && !beside && <div className="flex flex-col gap-0.5 pr-[7px]">{lines}</div>}
        <div className="flex items-end justify-between gap-[18px]">
          <div>
            {beside && lines}
            <p>{last}</p>
          </div>
          <Stamp time={time} status={status} />
        </div>
      </div>
    </Bubble>
  );
}

function Receipt() {
  return (
    <Bubble side="out" className="rounded-b-[22px] px-1.5 pb-[7px]">
      <a href="#receipt" className="relative flex h-[81px] gap-4 rounded-b-2xl bg-[#123c2b] px-5">
        <span className="flex h-[25px] w-9 shrink-0 items-center justify-center rounded-b-[5px] bg-[#c8103c] pb-1 text-[15px] font-bold text-white">
          PDF
        </span>
        <span className="flex min-w-0 flex-col">
          <span className="text-[25px] leading-[38px] whitespace-nowrap text-[#e4f5ea]">
            Receipt-2604260201006034340...
          </span>
          <span className="flex items-center gap-1.5 text-[17px] leading-6 text-[#85a896]">
            <span>1 page</span>
            <span className="text-xs">•</span>
            <span>217 KB</span>
            <span className="text-xs">•</span>
            <span>pdf</span>
          </span>
        </span>
      </a>
      <div className="flex justify-end pt-[13px] pr-[11px]">
        <Stamp time="19:26" status="delivered" />
      </div>
    </Bubble>
  );
}

function Group({ children }) {
  return <section className="flex flex-col gap-2">{children}</section>;
}

export default function App() {
  return (
    <div className="relative flex h-screen flex-col overflow-hidden bg-[#0a0a0a] font-['Inter',sans-serif]">
      <Wallpaper />
      <FaceDefs />
      <header className="relative h-1.5 shrink-0 bg-[#181818]" />
      <main className="relative flex flex-1 flex-col gap-6 overflow-hidden px-4">
        <Group>
          <Receipt />
          <Message
            side="out"
            tail
            time="19:26"
            status="delivered"
            lines={
              <p>
                done, please manage it for me <Pleading />
              </p>
            }
            last={<span className="block h-[31px]" />}
          />
        </Group>
        <Group>
          <Message side="in" tail time="19:26" last="Thanks" />
        </Group>
        <Group>
          <Message side="out" tail time="19:27" status="delivered" last="“thanks”?" />
        </Group>
        <Group>
          <Message
            side="in"
            tail
            beside
            time="19:27"
            lines={<p>What else am I supposed to do?</p>}
            last={
              <>
                Kneel down for you?
                <Sob />
              </>
            }
          />
        </Group>
        <Group>
          <Message
            side="out"
            tail
            time="19:27"
            status="delivered"
            lines={<p>i mean, an extra nice comment won’t do</p>}
            last="you anything"
          />
        </Group>
        <Group>
          <Message
            side="in"
            tail
            time="19:28"
            lines={
              <>
                <p>
                  Extra nice comment? For 20k??
                  <br />
                  Abegg
                  <Joy />
                  <Joy />
                </p>
                <p>Is this what your mates are sending to</p>
              </>
            }
            last={
              <>
                impress a lady? <Joy />
              </>
            }
          />
        </Group>
        <Group>
          <Message side="out" time="19:28" status="delivered" last="ohh" />
          <Message side="out" tail time="19:28" status="delivered" last="wow" />
        </Group>
        <Group>
          <Message side="in" tail time="19:28" last="Off the road for me pleaseeee" />
        </Group>
        <Group>
          <Message side="out" time="19:29" status="sent" last="fr?? are you fr rn???" />
          <Message side="out" time="19:30" status="sent" last="wait" />
          <Message side="out" time="19:30" status="sent" last="you blocked me???" />
          <Message side="out" tail time="19:30" status="sent" last="????" />
        </Group>
      </main>
    </div>
  );
}
